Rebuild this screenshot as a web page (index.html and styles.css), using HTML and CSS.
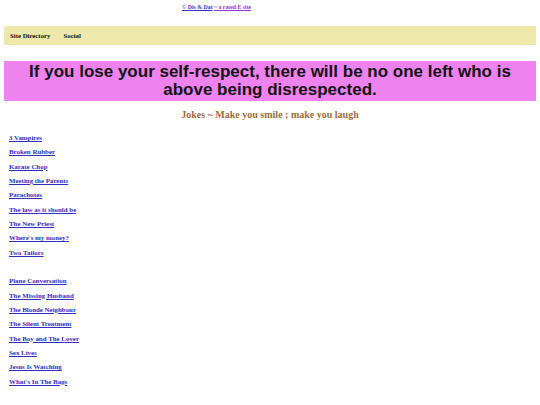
FILE: index.html
```html
<!DOCTYPE html>
<html>
<head>
<meta charset="utf-8">
<link rel="stylesheet" href="styles.css">
</head>
<body>
<div class="page">
  <p class="credit"><a href="#" class="credit-main">© Dis &amp; Dat</a> <a href="#" class="credit-sub">~ a rated E site</a></p>
  <nav class="nav">
    <a href="#">Site Directory</a>
    <a href="#">Social</a>
  </nav>
  <h1 class="quote">If you lose your self-respect, there will be no one left who is above being disrespected.</h1>
  <h2 class="sub">Jokes ~ Make you smile ; make you laugh</h2>
  <ul class="jokes">
    <li><a href="#">3 Vampires</a></li>
    <li><a href="#">Broken Rubber</a></li>
    <li><a href="#">Karate Chop</a></li>
    <li><a href="#">Meeting the Parents</a></li>
    <li><a href="#">Parachutes</a></li>
    <li><a href="#">The law as it should be</a></li>
    <li><a href="#">The New Priest</a></li>
    <li><a href="#">Where's my money?</a></li>
    <li><a href="#">Two Tailors</a></li>
    <li class="spacer"></li>
    <li><a href="#">Plane Conversation</a></li>
    <li><a href="#">The Missing Husband</a></li>
    <li><a href="#">The Blonde Neighbour</a></li>
    <li><a href="#">The Silent Treatment</a></li>
    <li><a href="#">The Boy and The Lover</a></li>
    <li><a href="#">Sex Lives</a></li>
    <li><a href="#">Jesus Is Watching</a></li>
    <li><a href="#">What's In The Bags</a></li>
  </ul>
</div>
</body>
</html>
```

FILE: styles.css
```css
html, body {
  margin: 0;
  padding: 0;
  background: #ffffff;
}
.page {
  padding: 0 4px;
  font-family: "Liberation Serif", "Times New Roman", serif;
  font-weight: bold;
}
.credit {
  margin: 0;
  padding: 4px 0 0 178px;
  height: 22px;
  box-sizing: border-box;
  font-size: 5.8px;
  line-height: 6px;
}
.credit a { color: #3333cc; }
.credit .credit-sub { color: #9933cc; }
.nav {
  display: flex;
  gap: 13px;
  align-items: center;
  height: 19px;
  margin-top: 4px;
  padding: 0 6px;
  background: #eee8aa;
}
.nav a {
  color: #111;
  text-decoration: none;
  font-size: 6.8px;
}
.quote {
  margin: 16px 0 0;
  height: 40px;
  box-sizing: border-box;
  padding-top: 2px;
  background: #ee82ee;
  color: #141414;
  font-family: "Liberation Sans", Arial, sans-serif;
  font-size: 17px;
  line-height: 18px;
  text-align: center;
}
.sub {
  margin: 7px 0 0;
  color: #9c6b3c;
  font-size: 10px;
  line-height: 13px;
  text-align: center;
}
.jokes {
  list-style: none;
  margin: 10px 0 0;
  padding: 0 0 0 5px;
}
.jokes li {
  height: 14.33px;
  font-size: 6.9px;
  line-height: 14.33px;
}
.jokes a { color: #2e2ebf; }
```
